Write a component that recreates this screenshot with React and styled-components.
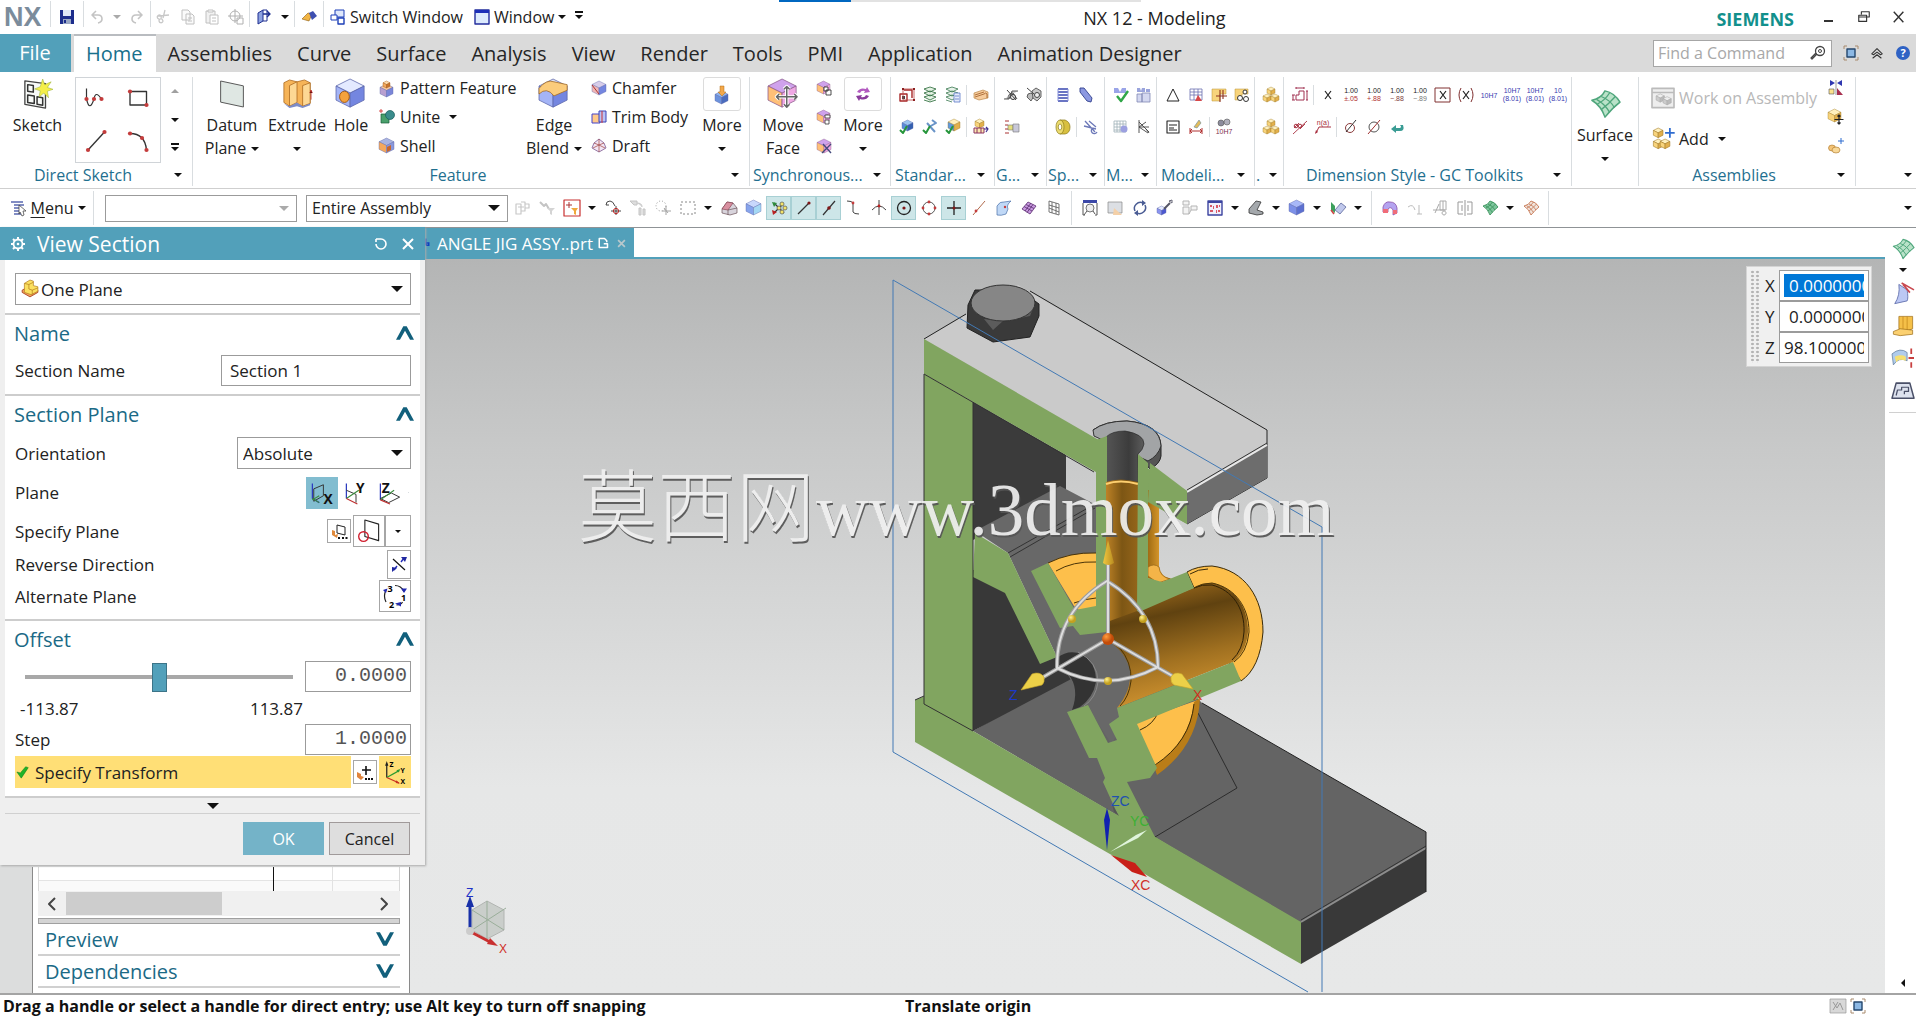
import React from 'react';
import styled, { createGlobalStyle } from 'styled-components';

const GlobalStyle = createGlobalStyle`
  * {
    box-sizing: border-box;
  }
  body {
    margin: 0;
    background: #fff;
    color: #222;
    font-family: 'Open Sans', 'Noto Sans', sans-serif;
    font-size: 16px;
  }
  button, input, select {
    font: inherit;
    color: inherit;
    border-radius: 0;
    margin: 0;
  }
`

/* ---------- shared bits ---------- */

const Page = styled.div`
  display: flex;
  flex-direction: column;
  height: 100vh;
  overflow: hidden;
`
const PlainButton = styled.button`
  display: inline-flex;
  align-items: center;
  justify-content: center;
  flex: none;
  padding: 0;
  border: 0;
  background: none;
`
const Caret = styled.span`
  flex: none;
  width: 0;
  height: 0;
  border-style: solid;
  border-width: ${p => p.$size || 4}px ${p => p.$size || 4}px 0;
  border-color: ${p => p.$color || '#111'} transparent transparent;
`
const OverCaret = styled(Caret)`
  position: relative;
  &::before {
    content: '';
    position: absolute;
    left: -4px;
    bottom: 6px;
    width: 8px;
    height: 2px;
    background: #111;
  }
`
const CaretSlot = styled(PlainButton)`
  width: ${p => p.$w || 20}px;
  height: 20px;
`
const Rule = styled.span`
  flex: none;
  width: 1px;
  height: ${p => p.$h || 34}px;
  margin: 0 ${p => p.$gap || 0}px;
  background: #d9dde0;
`
const SelectWrap = styled.div`
  display: flex;
  align-items: center;
  gap: 2px;
  flex: ${p => p.$w ? 'none' : 1};
  width: ${p => p.$w ? p.$w + 'px' : 'auto'};
  height: ${p => p.$h}px;
  padding: 0 7px 0 5px;
  border: 1px solid #9b9b9b;
  background: #fff;
  select {
    flex: 1;
    min-width: 0;
    padding: 0;
    border: 0;
    outline: 0;
    appearance: none;
    background: none;
  }
`

/* ---------- icons ---------- */

const Svg = styled.svg`
  display: block;
  flex: none;
  overflow: visible;
`

const Cube = ({ x = 1, y = 1, s = 14, top = '#e4eaff', left = '#a4b4f6', right = '#7486e0', edge = '#5a64a8' }) => {
  const h = s / 2, q = s / 4
  return (
    <g strokeWidth=".4" stroke={edge} strokeLinejoin="round">
      <path d={`M${x} ${y + q}l${h} ${-q}l${h} ${q}l${-h} ${q}z`} fill={top} />
      <path d={`M${x} ${y + q}l${h} ${q}v${h}l${-h} ${-q}z`} fill={left} />
      <path d={`M${x + s} ${y + q}l${-h} ${q}v${h}l${h} ${-q}z`} fill={right} />
    </g>
  )
}
const GoldCube = p => <Cube top="#fff0bc" left="#f8d47c" right="#e2b04c" edge="#a07824" {...p} />
const SyncCube = p => <Cube top="#cfa2ec" left="#ffc078" right="#f0a8e4" edge="#8a5a8c" {...p} />
const Tiny = ({ y, c = '#222', children }) => (
  <text x="8" y={y} fontSize="7" textAnchor="middle" fill={c} fontFamily="'Liberation Sans', sans-serif">{children}</text>
)
const Dot = ({ x, y, r = 1.4, c = '#c43c3c' }) => <circle cx={x} cy={y} r={r} fill={c} />
const L = ({ d, c = '#333', w = 1, f = 'none' }) => <path d={d} stroke={c} strokeWidth={w} fill={f} strokeLinejoin="round" />
const Sheet = ({ c = '#4fa67c', f = '#b9e2c8' }) => (
  <>
    <L d="M1 6Q6 5 8 1Q13 2 16 7Q12 10 8 15Q6 9 1 6z" c={c} f={f} w={0.8} />
    <L d="M3.500 5.500Q8 8 10.500 12.500M6 4Q11 6 13 10M4 8Q8 6 10.500 2M6 11Q10 8 13.500 4" c={c} w={0.7} />
  </>
)

const shapes = {
  save: <><path d="M1 1h14v14H1z" fill="#1c2d8c" /><path d="M4 1h8v6H4z" fill="#dfe7f7" /><path d="M4 10h8v5H4z" fill="#9aa7c4" /><path d="M5 11h2v3H5z" fill="#1c2d8c" /></>,
  undo: <L d="M3 6h6q4 0 4 4q0 3-4 4M7 2L3 6l4 4" c="#c4c4c4" w={1.6} />,
  redo: <L d="M13 6H7q-4 0-4 4q0 3 4 4M9 2l4 4l-4 4" c="#c4c4c4" w={1.6} />,
  cut: <L d="M9 1L7 9M2 7l11-1M6 10a2 2 0 1 0 1 2zM5 9a2 2 0 1 0-2 1" c="#c8c8c8" w={1.3} />,
  copy: <L d="M2 1h6l2 2v8H2zM6 5h6l2 2v8H6zM8 9h4M8 12h4" c="#c0c0c0" f="#fafafa" />,
  paste: <><L d="M2 2h9v12H2z" c="#c0c0c0" f="#f1f1f1" /><L d="M6 6h8v9H6zM8 9h4M8 12h4M4 1h5v2H4z" c="#c0c0c0" f="#fff" /></>,
  target: <><circle cx="7" cy="7" r="5" fill="none" stroke="#b0b0b0" /><L d="M7 0v14M0 7h15M9 9h6v6H9z" c="#b0b0b0" /></>,
  exit: <><L d="M2 4l5-3v11l-5 3z" c="#1e2f90" f="#8da2e0" /><L d="M7 5h7M11 2l3 3l-3 3" c="#1e2f90" w={1.4} /><L d="M7 1h4v11H7" c="#1e2f90" /></>,
  hand: <><path d="M1 10l6-6l4 1l-3 7z" fill="#f2b544" stroke="#8a5a10" strokeWidth=".6" /><path d="M8 4l4-2l4 5l-5 4z" fill="#3e4fb0" /></>,
  switchWin: <><L d="M5 1h9v7H5z" c="#1c3fb8" f="#dfe8fb" /><L d="M1 6h6v5H1z" c="#1c3fb8" f="#fff" /><L d="M8 9h6v6H8z" c="#1c3fb8" f="#fff" w={1.4} /></>,
  window: <><L d="M1 1h14v14H1z" c="#222c9c" f="#dceafd" w={1.4} /><path d="M1 1h14v3H1z" fill="#1c2fb8" /></>,
  search: <><circle cx="10" cy="6" r="4.500" fill="none" stroke="#444" strokeWidth="1.300" /><circle cx="10" cy="6" r="1.500" fill="none" stroke="#444" /><L d="M7 9l-5 5l-1-1l5-5" c="#444" w={1.3} /></>,
  full: <><L d="M4 4h8v8H4z" c="#24476e" f="#8cb8e4" w={1.400} /><L d="M1 4V1h3M12 1h3v3M15 12v3h-3M4 15H1v-3" c="#a88a6c" /></>,
  up: <L d="M2 9l6-6l6 6l-2 1l-4-3l-4 3zM3 14l5-4l5 4" c="#333" w={1.2} />,
  help: <><circle cx="8" cy="8" r="7" fill="#2f62c4" /><text x="8" y="12" fontSize="11" fontWeight="700" textAnchor="middle" fill="#fff">?</text></>,
  min: <path d="M3 11h9v2H3z" fill="#333" />,
  restore: <L d="M5 5V2h9v6h-3M2 6h9v7H2zM2 8h9" c="#333" w={1.3} />,
  close: <L d="M2 2l11 12M13 2L2 14" c="#333" w={1.6} />,

  sketch: <><L d="M1 1l11 1.500v13L1 13.500z" c="#444" f="#f7f9f7" w={0.7} /><L d="M2.500 3l3 .5v3.500l-3-.5zM2.500 8.500l3.500.6v4l-3.500-.6zM7.500 9.500l3 .5v4l-3-.5z" c="#333" w={0.8} /><path d="M10.500 0l1 3l3.500-1.500l-2 3l3 1l-3 1l.6 3.500l-2.500-2.500l-2.500 2l.6-3.200l-3-1l3-1.200z" fill="#f4ee4a" stroke="#9db43c" strokeWidth=".3" /></>,
  spline: <><L d="M1 1v7q2 9 5 0q1-6 5 0" c="#333" w={0.8} /><Dot x={1} y={8} /><Dot x={6} y={8} /><Dot x={11} y={8} /></>,
  rect: <><L d="M2 3h11v9H2z" c="#333" w={0.9} /><Dot x={2} y={3} /><Dot x={13} y={12} /></>,
  line: <><L d="M2 14L13 2" c="#333" w={0.9} /><Dot x={2} y={14} /><Dot x={13} y={2} /></>,
  arc: <><L d="M2 3q10 0 11 11" c="#333" w={0.9} /><Dot x={2} y={3} /><Dot x={10} y={6} /><Dot x={13} y={14} /></>,
  datum: <L d="M1 0l14 3v13L1 13z" c="#555" f="#dfe7e3" w={0.6} />,
  extrude: <g stroke="#a8641a" strokeWidth=".4"><path d="M1 2l3-1.500l4 1l4-1l3 1.500v11l-4 1.500l-3-1.500l-4 1.500l-3-2z" fill="#f6b458" /><path d="M4 3.500l4-2v11l-4 2zM11 3.500l4-1.500v11l-4 1.500z" fill="#fdd894" /><path d="M1 13l3 1.500l4-2l3 2l4-1.500v1l-4 1.500l-3-1l-4 1z" fill="#7c8cc8" stroke="none" /><path d="M15.500 6v5M14.800 7.500l.7-1.500l.7 1.500" stroke="#c02020" /></g>,
  hole: <><Cube s={15} x={0} y={0} /><ellipse cx="4.500" cy="9.500" rx="2.600" ry="3" fill="#f5a23c" stroke="#a05810" strokeWidth=".5" /></>,
  pattern: <><Cube x={1} y={4} s={13} top="#f4c49c" left="#b9a0d0" right="#7a86d8" /><Cube x={4} y={1} s={7} top="#ffdcac" left="#f2a85c" right="#c8742c" edge="#a0581c" /></>,
  unite: <><path d="M2 5h8v9H2z" fill="#4aa06c" stroke="#175c3a" strokeWidth=".7" /><circle cx="11" cy="6" r="4.500" fill="#3a8c8c" stroke="#175c5a" strokeWidth=".7" /><L d="M2 0v4M0 2h4" c="#c22" w={0.8} /></>,
  shell: <><Cube s={15} x={0} y={0} left="#f5a85c" top="#aab4e0" right="#8a98dc" /><path d="M8 9l4-2v5l-4 2z" fill="#c8672c" /></>,
  edge: <><Cube s={15} x={0} y={0} top="#dfe2f2" /><path d="M0 5Q4 0 8 1.500l7 1.500v3l-7 3Q4 4 0 8z" fill="#fbcc7c" stroke="#a0661c" strokeWidth=".4" /></>,
  chamfer: <><Cube s={14} left="#f0b8b8" top="#d7cdea" /><L d="M1 5l7 9" c="#a33" /></>,
  trim: <><L d="M1 5h8v9H1z" c="#44c" f="#ffc98a" /><L d="M8 2h7v11H8z" c="#3a44b8" f="#b9c2f6" /><L d="M11 2v12" c="#c33" /></>,
  draft: <><L d="M8 1l5 4l2 5l-7 4l-7-4l2-5z" c="#8a6a9c" f="#f2e6f4" w={0.9} /><L d="M8 1v13M2 10l6-3l6 3M3 5l5 2l5-2" c="#a0403c" w={0.7} /></>,
  insert: <><Cube x={1} y={5} s={13} top="#8fb4ee" left="#6c92dc" right="#4a6cbe" /><path d="M6 0h4v6h2l-4 4l-4-4h2z" fill="#f3a84a" stroke="#b06c18" strokeWidth=".5" /></>,
  moveFace: <><SyncCube s={15} x={0} y={0} /><L d="M10 4v11M4.500 9.500h11M8.500 5.500L10 4l1.500 1.500M8.500 13.500L10 15l1.500-1.500M6 8l-1.500 1.500L6 11M14 8l1.500 1.500L14 11" c="#fff" w={1.800} /><L d="M10 4v11M4.500 9.500h11M8.500 5.500L10 4l1.500 1.500M8.500 13.500L10 15l1.500-1.500M6 8l-1.500 1.500L6 11M14 8l1.500 1.500L14 11" c="#666" w={0.8} /></>,
  facePull: <><SyncCube s={13} /><L d="M8 7h4v4H8zM10 10h5v5h-5z" c="#222" f="#fff" w={0.8} /></>,
  faceOff: <><SyncCube s={13} /><L d="M9 6h5v3H9zM9 11h4v4H9z" c="#333" f="#fff" w={0.8} /></>,
  faceDel: <><SyncCube s={14} /><L d="M7 6l8 9M15 6l-9 9" c="#444a7c" w={1.4} /></>,
  recycle: <><path d="M2 6q3-5 9-3l1-2l3 5l-6 1l1-2q-4-1-5 2z" fill="#b25ac0" /><path d="M14 10q-3 5-9 3l-1 2l-3-5l6-1l-1 2q4 1 5-2z" fill="#8a3c9c" /></>,

  cage: <><L d="M1 7h7v7H1zM5 3h8v8" c="#a82828" w={1.4} /><path d="M3 9h3v3H3z" fill="#444" /><L d="M4 2h11v11H4z" c="#b84848" w={0.8} /><path d="M3 1h2v2H3zM14 1h2v2h-2zM14 12h2v2h-2z" fill="#8c2020" /></>,
  stack: <><L d="M8 0l6 2l-6 3l-6-3zM8 4l6 2l-6 3l-6-3zM8 8l6 2l-6 3l-6-3zM2 13l6 2l6-2" c="#286838" f="#e4f2e4" w={0.8} /></>,
  stackList: <><L d="M7 0l6 2l-6 3l-6-3zM7 4l6 2l-6 3l-6-3zM7 8l6 2l-6 3l-6-3zM1 13l6 2" c="#3a7850" f="#e8f2ea" w={0.8} /><L d="M9 6h6v9H9zM10 9h4M10 12h4" c="#5a78c8" f="#e6ecfb" w={0.8} /></>,
  tape: <><path d="M1 6l9-3l5 2v6l-9 2l-5-2z" fill="#f6cc9c" stroke="#b07838" strokeWidth=".6" /><L d="M2 8l9-3M2 10l9-3M14 11V7q-1-2-3 0" c="#a05c24" w={0.8} /></>,
  blueCheck: <><Cube x={3} y={1} s={11} top="#9cc4f0" left="#5a8cd8" right="#3460b0" /><L d="M1 11l3 3l4-7" c="#27963c" w={2} /></>,
  toolCheck: <><L d="M5 4l8 9M10 1l4 3l-7 4" c="#6a94c8" w={2} /><L d="M1 11l3 3l4-7" c="#27963c" w={2} /></>,
  goldCheck: <><GoldCube x={3} y={0} s={12} left="#5f9ae0" /><L d="M1 11l3 3l4-7" c="#27963c" w={2} /></>,
  parts: <><GoldCube x={2} y={0} s={9} /><L d="M1 9h10v5H1zM4 9v5M8 9v5" c="#8a3060" f="#fbe8b0" /><L d="M11 10h4M13 8l2 2l-2 3" c="#403090" w={1.2} /></>,
  gear: <><L d="M1 12h5l3-8h6M5 12q0-6 5-6l4 6" c="#444" f="#d0d0d0" w={0.9} /><circle cx="10" cy="10" r="2.500" fill="#eee" stroke="#333" /><L d="M4 3l9 10" c="#444" /></>,
  gearPair: <><path d="M1 10q0-4 4-4l3 3l-3 5z" fill="#bbb" stroke="#444" strokeWidth=".8" /><path d="M6 4l4-3l5 3v6l-4 4l-4-3z" fill="#c8c8c8" stroke="#444" strokeWidth=".8" /><circle cx="11" cy="8" r="2.500" fill="#eee" stroke="#444" /><L d="M1 1l7 6" c="#444" /></>,
  gearList: <><L d="M2 2h4M2 6h3M2 10h3M2 14h4" c="#a33" /><path d="M5 6h5v5H5z" fill="#e5df7c" stroke="#777" strokeWidth=".6" /><path d="M10 5h6v8h-6z" fill="#c8c8d8" stroke="#777" strokeWidth=".6" /></>,
  coil: <><L d="M3 2h10M3 5h10M3 8h10M3 11h10M3 14h10" c="#3a48b0" w={1.6} /><L d="M3 2v12M13 2v12" c="#8a94dc" /></>,
  spring: <path d="M2 1l4 0l8 10l-1 4l-4-1L2 5z" fill="#8c98e0" stroke="#30408c" strokeWidth=".9" />,
  ring: <><path d="M5 1h5q5 2 5 7q0 6-5 7H5z" fill="#d8c040" stroke="#8a7818" strokeWidth=".7" /><ellipse cx="5" cy="8" rx="4" ry="7" fill="#ecdc70" stroke="#8a7818" strokeWidth=".7" /><ellipse cx="5" cy="8" rx="1.800" ry="3" fill="#fff" stroke="#8a7818" strokeWidth=".7" /></>,
  scissors: <L d="M2 2l10 11M1 7l12 3M6 2l7 6M10 9a3 3 0 1 0 4 4" c="#6c78b8" w={1.3} />,
  vCheck: <><path d="M1 1h4l2 4l2-4h4v5H1z" fill="#9aa4e8" /><L d="M4 9l4 5l7-10" c="#2fa648" w={2.400} /></>,
  bars: <><L d="M1 7h5v8H1zM6 6h8v9H6z" c="#8088b4" f="#d4d8f0" w={0.8} /><path d="M1 1h3l1 3l1-3h3v4H1zM10 2h4v3h-4z" fill="#9aa4dc" /></>,
  table: <><L d="M1 2h12v11H1zM1 5h12M1 8h12M1 11h12M4 2v11M7 2v11M10 2v11" c="#a0b0b8" w={0.8} /><circle cx="11" cy="10" r="3.500" fill="#9ca0e0" /></>,
  axis: <L d="M3 1v13M3 8h10M3 8l9 6M3 3l10 10M10 3L3 8M10 10l3 4" c="#444" w={0.9} />,
  tri: <L d="M8 2l6 12H2z" c="#222" />,
  grid: <><L d="M2 2h12v11H2zM2 5h12M2 8h12M6 2v11M10 2v11" c="#6a70b0" w={0.8} /><path d="M10 8l4 6H7z" fill="#d84848" /></>,
  goldPlus: <><path d="M1 2h14v5H9v7H1z" fill="#f8d47c" stroke="#b89030" strokeWidth=".5" /><L d="M9 3v12M5 9h11M12 3v9" c="#8c3020" w={1.1} /></>,
  goldGear: <><path d="M1 2h13v5H8v6H1z" fill="#f8d47c" stroke="#b89030" strokeWidth=".5" /><circle cx="12" cy="12" r="2.500" fill="#fff" stroke="#333" /><circle cx="6" cy="11" r="2.500" fill="#fff" stroke="#333" /><circle cx="11" cy="5" r="2" fill="#fff" stroke="#333" /></>,
  note: <L d="M2 2h12v12H2zM4 6h8M4 9h5M4 11h8" c="#222" w={1.1} />,
  dimension: <><path d="M6 8l5-7l2 3l-4 5z" fill="#e2bc5c" stroke="#6a8a9c" strokeWidth=".6" /><L d="M2 9v6M14 9v6M2 12h12M4 10l-2 2l2 2M12 10l2 2l-2 2" c="#b03030" /></>,
  h7: <><circle cx="5" cy="4" r="3" fill="#8c8c9c" stroke="#555" strokeWidth=".6" /><circle cx="11" cy="3" r="3" fill="#b0b0bc" stroke="#555" strokeWidth=".6" /><Tiny y={15} c="#803050">10H7</Tiny></>,
  cubes: <><GoldCube x={4} y={0} s={8} /><GoldCube x={0} y={7} s={8} /><GoldCube x={8} y={7} s={8} /></>,
  stepDim: <L d="M4 13V8h3V4h5v9zM4 1h8M4 0v2M12 0v2M1 8v5M0 8h3M0 13h3M15 4v9M14 4h2M14 13h2" c="#a03050" w={1} />,
  x: <L d="M5 4l6 8M11 4l-6 8" c="#222" w={1.2} />,
  d1: <><Tiny y={6}>1.00</Tiny><Tiny y={14} c="#b03030">±.05</Tiny></>,
  d2: <><Tiny y={6}>1.00</Tiny><Tiny y={14} c="#b03030">+.88</Tiny></>,
  d3: <><Tiny y={6}>1.00</Tiny><Tiny y={14} c="#804040">−.88</Tiny></>,
  d4: <><Tiny y={6}>1.00</Tiny><Tiny y={14} c="#777">−.89</Tiny></>,
  xbox: <><L d="M0 1h15v14H0z" c="#803030" /><L d="M5 4l6 8M11 4l-6 8" c="#222" w={1.2} /></>,
  xparen: <><L d="M3 1q-4 7 0 14M13 1q4 7 0 14" c="#803030" /><L d="M5 4l6 8M11 4l-6 8" c="#222" w={1.2} /></>,
  t1: <Tiny y={11} c="#3838b0">10H7</Tiny>,
  t2: <><Tiny y={6} c="#3838b0">10H7</Tiny><Tiny y={14} c="#3838b0">(8.01)</Tiny></>,
  t3: <><Tiny y={6} c="#3838b0">10H7</Tiny><Tiny y={14} c="#3838b0">(8.01)</Tiny></>,
  t4: <><Tiny y={6} c="#3838b0">10</Tiny><Tiny y={14} c="#3838b0">(8.01)</Tiny></>,
  leader: <><L d="M1 15L15 2M2 9l5-5M8 10l5-5" c="#a83040" w={0.9} /><circle cx="4" cy="7" r="1.800" fill="none" stroke="#a83040" /><circle cx="8" cy="7" r="1.800" fill="none" stroke="#a83040" /></>,
  flag: <><L d="M1 14l3-6h12" c="#a83040" /><path d="M0 15l1-4l2 2z" fill="#a83040" /><Tiny y={6} c="#a83040">n(a)</Tiny></>,
  dia1: <><circle cx="7" cy="9" r="4.500" fill="none" stroke="#8a3a3a" /><L d="M3 13L13 1" c="#333" /></>,
  dia2: <><circle cx="8" cy="8" r="5" fill="none" stroke="#555" /><L d="M2 15L14 1" c="#a03030" /></>,
  back: <path d="M2 10l5-4v3h4q2-1 0-3h3q2 6-3 6H7v2z" fill="#3a9c94" />,
  sheet: <Sheet />,
  workAsm: <><L d="M0 1h16v14H0zM0 4h16" c="#bbb" f="#eee" w={1.2} /><Cube x={3} y={5} s={6} top="#eee" left="#ccc" right="#bbb" edge="#aaa" /><Cube x={8} y={7} s={6} top="#eee" left="#ccc" right="#bbb" edge="#aaa" /></>,
  add: <><GoldCube x={1} y={0} s={7} /><GoldCube x={1} y={8} s={7} /><GoldCube x={6} y={8} s={7} /><L d="M13 0v7M9.500 3.500h7" c="#2f6cd0" w={1.3} /></>,
  mirror: <><path d="M2 0l5 3l-5 3zM14 0L9 3l5 3z" fill="#3038b0" /><L d="M8 0v15" c="#555" w={0.6} /><path d="M1 9h5v5H1z" fill="#fbe28c" stroke="#555" strokeWidth=".6" /><path d="M9 15V8l6 7z" fill="#a83050" /></>,
  moveComp: <><GoldCube s={13} x={0} y={0} /><L d="M11 6v9M6.500 10.500h9M9.500 7.500L11 6l1.500 1.500M9.500 13.500L11 15l1.500-1.500" c="#222" w={1.2} /></>,
  constraint: <><ellipse cx="4" cy="10" rx="3.500" ry="3" fill="#f4c478" stroke="#a87020" strokeWidth=".6" /><ellipse cx="8" cy="12" rx="4" ry="3" fill="#f8d898" stroke="#a87020" strokeWidth=".6" /><L d="M13 0v6M10 3h6" c="#2f6cd0" /></>,

  menu: <><L d="M0 2h12M3 5h10M3 8h7M3 11h7M3 14h7" c="#5a68b0" w={1.5} /><path d="M8 5l7 6h-3l1 4l-2 1l-2-4l-1 2z" fill="#fff" stroke="#333" strokeWidth=".7" /></>,
  greyParts: <L d="M2 4h5v10H2zM7 2h4v9H7M11 4h4v4h-4M4 7h6" c="#c8c8c8" w={1.2} />,
  greyFilter: <><L d="M1 2l4 4l2-2l3 5" c="#c4c4c4" w={2} /><path d="M8 8h8l-3 3v4l-2-1v-3z" fill="#d4d4d4" /></>,
  filter: <><L d="M0 0h16v16H0z" c="#c83030" f="#fff" w={1.2} /><path d="M7 8h7l-2 3v4l-2-1v-3z" fill="#f0a83c" /><L d="M5 2v6M2 5h6" c="#a33" w={1} /></>,
  arrowTarget: <><L d="M1 5q0-4 4-4q3 0 5 5M1 5h3M11 6v9M6 11h10" c="#333" w={0.9} /><circle cx="11" cy="11" r="2.600" fill="none" stroke="#b22" /></>,
  greyArrow: <L d="M0 1h7v4H4zM7 3q5 0 5 4M9 8h2v7H9zM13 9h2v6h-2z" c="#c4c4c4" f="#ddd" />,
  greyTree: <><circle cx="6" cy="6" r="5" fill="none" stroke="#999" strokeDasharray="1 2" /><L d="M11 6v9M7 11h9M9 8l4 5" c="#a4a4a4" w={1} /></>,
  marquee: <path d="M1 2h14v12H1z" fill="none" stroke="#888" strokeDasharray="2 2" />,
  houseCube: <><path d="M1 9l5-7l6 1l4 5v5l-7 2l-8-2z" fill="#d8d4dc" stroke="#6a5058" strokeWidth=".7" /><path d="M1 9l5-7l6 1l-5 7z" fill="#d890a0" stroke="#803848" strokeWidth=".6" /><L d="M7 10l9-2M7 10v5" c="#6a5058" w={0.7} /></>,
  solid: <Cube s={15} x={0} y={0} top="#c8d8fc" left="#86a4ec" right="#a4d8f4" />,
  snap: <><L d="M3 3l10 10M3 13L12 4" c="#333" w={1.2} /><path d="M1 2l5 1l-3 4z" fill="#2f8c3c" /><path d="M1 10l5 2l-4 3z" fill="#b22" /><g fill="#f4e468" stroke="#555" strokeWidth=".7"><circle cx="11" cy="4" r="2" /><circle cx="14" cy="8" r="2" /><circle cx="8" cy="8" r="2" /><circle cx="11" cy="12" r="2" /></g></>,
  endPt: <><L d="M2 14L13 3" w={1.2} /><Dot x={13} y={3} r={1.6} c="#801818" /></>,
  midPt: <><L d="M2 15L14 1" w={1.2} /><Dot x={8} y={8} r={1.800} c="#801818" /></>,
  curvePt: <><L d="M1 1q5 0 6 2v9q1 2 6 2" c="#444" /><Dot x={7} y={3} /></>,
  cross: <><L d="M8 0v15M1 10q7-8 14 0" c="#444" /><Dot x={8} y={6} c="#b22" /></>,
  center: <><circle cx="8" cy="8" r="6.500" fill="none" stroke="#222" strokeWidth="1.300" /><Dot x={8} y={8} r={1.600} c="#801818" /></>,
  quad: <><circle cx="8" cy="8" r="6" fill="none" stroke="#555" /><Dot x={8} y={2} /><Dot x={8} y={14} /><Dot x={2} y={8} /><Dot x={14} y={8} /></>,
  plus: <><L d="M8 1v14M1 8h14" c="#222" w={1.300} /><Dot x={8} y={8} r={1.500} c="#801818" /></>,
  onCurve: <><L d="M2 15L14 1" c="#b06a4c" /><Dot x={5} y={11} /></>,
  face: <><path d="M1 6q3-5 7-4l7-1q-5 4-3 8l-2 5q-5 2-9 1z" fill="#c0d8f6" stroke="#4a70a8" strokeWidth=".7" /><Dot x={9} y={7} r={1.200} /></>,
  mesh: <><L d="M1 9l6-7l8 4l-6 8z" c="#5a2c70" f="#c89ae0" w={0.8} /><L d="M3 6.500l8 4.500M5 4.500l8 4M4 11l6-8M6 12.500l6-8" c="#5a2c70" w={0.8} /></>,
  gridPlane: <L d="M3 1l10 3v11L3 12zM3 5l10 3M3 8l10 4M6 2v11M10 3v11" c="#555" w={0.8} />,
  zoomFit: <><path d="M1 0h14v3H1z" fill="#3c48a8" /><L d="M1 3v12h2M15 3v12h-2" c="#555" /><circle cx="8" cy="8" r="4" fill="#eee" stroke="#777" /><L d="M5 11l-3 4M11 11l2 3" c="#555" /></>,
  shade: <><path d="M1 2h14v11H1z" fill="#dcdfe4" stroke="#888" strokeWidth=".7" /><path d="M7 8l8 7H6z" fill="#f4d0a8" /></>,
  rotate: <><L d="M3 11a6 6 0 0 1 8-8M13 5a6 6 0 0 1-8 8" c="#4a5c94" w={1.500} /><path d="M10 0l4 3l-4 3zM6 10l-4 3l4 3z" fill="#4a5c94" /></>,
  pan: <><Cube x={0} y={6} s={9} left="#8a94f0" right="#4c58d0" /><L d="M7 9l6-6" c="#556" w={2} /><L d="M12 1l3-1v3z" c="#667" f="#fff" /></>,
  greyDocs: <L d="M1 1h6v4H1zM1 7h6v7H1zM9 6h6v4H9zM9 10l-2 4" c="#b4b4b4" f="#f4f4f4" w={1} />,
  layout: <><L d="M1 1h14v14H1z" c="#3c44a0" f="#f0f0fc" w={1.400} /><path d="M1 1h14v2H1z" fill="#3c44a0" /><g fill="#d85868"><path d="M3 5h2v2H3zM6 6h1v3H6zM9 5h2v3H9zM12 5h1v2h-1zM3 10h3v2H3zM9 10h1v3H9zM11 10h2v2h-2z" /></g></>,
  wedge: <path d="M1 9l7-8l5 1l-4 8l6 2v2l-6 1l-8-2z" fill="#a4a8ac" stroke="#333" strokeWidth=".8" />,
  blueCube: <Cube s={15} x={0} y={0} top="#a8b8f8" left="#7c90e8" right="#5c70d0" />,
  planes: <><path d="M1 2l4 4v7l-4-3z" fill="#3ca05c" /><path d="M5 10l6-7l5 4l-6 7z" fill="#c0c8ec" stroke="#4a5890" strokeWidth=".7" /><L d="M1 10l3 4" c="#c44" w={1.500} /></>,
  section: <><path d="M1 7q2-6 7-5q6 0 7 6v5l-4 2V10q-2-4-5-1v3H1z" fill="#b4a4f0" stroke="#8c50a8" strokeWidth=".8" /><path d="M1 9h5v4H1zM11 10h4v4h-4z" fill="#f06c78" /></>,
  greySmall: <L d="M1 7q5-4 7 3M12 5v9M10 14h5" c="#bbb" />,
  greyCar: <L d="M8 1h6v9H8zM1 10h12M3 13l4-9M12 11a2 2 0 1 0 .1 0M11 1v9" c="#aaa" />,
  greyBook: <L d="M6 2H1v12h5M10 2h5v12h-5M8 0v16M5 5v6M11 5v6" c="#999" w={1} />,
  gradient: <Sheet c="#2f8c50" f="#7cc49c" />,
  ribs: <Sheet c="#c06840" f="#f0e4dc" />,

  gearWhite: <><circle cx="8" cy="8" r="4.500" fill="none" stroke="#fff" strokeWidth="1.800" /><circle cx="8" cy="8" r="1.300" fill="#fff" /><path d="M8 1v2.500M8 12.500V15M1 8h2.500M12.500 8H15M3 3l2 2M11 11l2 2M13 3l-2 2M5 11l-2 2" stroke="#fff" strokeWidth="2" /></>,
  reset: <><L d="M8 3a5 5 0 1 1-5 5" c="#fff" w={1.600} /><L d="M3 3h5M3 3v3" c="#fff" w={1.600} /></>,
  closeWhite: <L d="M3 3l10 10M13 3L3 13" c="#fff" w={2} />,
  closePart: <L d="M2 2l12 12M14 2L2 14" c="#b9c8cc" w={3} />,
  onePlane: <><path d="M1 9l8-4l6 4v2l-7 4l-7-4z" fill="#f4a060" stroke="#a03818" strokeWidth=".7" /><path d="M3 3l5-3l3 1v4l4 1v4l-6 3l-6-2z" fill="#fbe060" stroke="#b07818" strokeWidth=".6" /><L d="M3 3l4 1v4l3 1M7 4l4-2M10 9v4M10 9l5-2" c="#b07818" w={0.6} /></>,
  planeX: <><L d="M1 1v11l5 3" c="#2c3cc0" w={0.9} /><L d="M2 5l7-3v8l-7 4z" c="#333" w={0.7} /><L d="M1 13l5-3M1 12l5 3" c="#3a8c3c" w={0.8} /><text x="9" y="16" fontSize="10" fontWeight="700" fill="#111">X</text></>,
  planeY: <><L d="M1 1v11" c="#2c3cc0" w={0.9} /><L d="M1 6l7 3v6" c="#333" w={0.7} /><L d="M1 12l9-6" c="#3a8c3c" w={0.8} /><L d="M1 12l8 4" c="#c03030" w={0.8} /><text x="8" y="8" fontSize="10" fontWeight="700" fill="#111">Y</text></>,
  planeZ: <><L d="M1 1v12" c="#2c3cc0" w={0.9} /><L d="M1 12l8-4l6 3l-8 4z" c="#333" w={0.7} /><L d="M1 13l10-7" c="#3a8c3c" w={0.8} /><L d="M1 13l7 3" c="#c03030" w={0.8} /><text x="2" y="8" fontSize="10" fontWeight="700" fill="#111">Z</text></>,
  dlgPlane: <><L d="M6 2l8 2v8l-8-2z" c="#222" /><path d="M1 7l3 1v4l3-1l-1 4l-5-3z" fill="#e08a3c" /><path d="M7 14h2v2H7zM11 14h2v2h-2zM14.500 14h2v2h-2z" fill="#111" /></>,
  inferPlane: <><L d="M5 0l10 3v12L5 12z" c="#222" w={0.8} /><circle cx="4" cy="12" r="3.500" fill="none" stroke="#d02030" strokeWidth="1" /></>,
  reverse: <><L d="M2 3l12 11" c="#111" w={1.200} /><L d="M3 14l3-4M10 6l3-4" c="#2028b8" w={1.400} /><path d="M1 11l5 1l-5 4zM10 1h6l-2 5z" fill="#2028a0" /></>,
  cycle: <><text x="3" y="5" fontSize="6" fontWeight="700">3</text><text x="12" y="11" fontSize="6" fontWeight="700">1</text><text x="4" y="16" fontSize="6" fontWeight="700">2</text><L d="M8 1q4 0 6 4M13 12q-1 2-4 2M2 12q-2-4 0-8" c="#222" w={0.8} /><path d="M12 3h4l-2 3zM8 13l4-1v3zM0 4l3-1l-1 3z" fill="#2028b0" /></>,
  pointDlg: <><L d="M9 2v9M5 6h9" c="#111" w={1.600} /><path d="M0 8l4 2v2l3 1l-3 3l-4-3z" fill="#e0843c" /><path d="M8 14h2v2H8zM11 14h2v2h-2zM14 14h2v2h-2z" fill="#111" /></>,
  csys: <><L d="M2 12V2" c="#222" w={0.9} /><L d="M2 12l9-5" c="#2c9a30" w={0.9} /><L d="M2 12l9 4" c="#c83020" w={0.9} /><path d="M.8 3.500L2 0l1.200 3.500z" fill="#222" /><path d="M9 6.800l3-1l-1.500 2.500z" fill="#2c9a30" /><path d="M9 14l2.500 2.500L8.500 16z" fill="#c83020" /><g fontSize="5" fontWeight="700"><text x="4" y="4">Z</text><text x="12" y="9">Y</text><text x="12" y="17">X</text></g></>,
  check: <path d="M1 8l4 1l6-7l3 1l-8 12z" fill="#1fb428" stroke="#127c18" strokeWidth=".6" />,
  chevUp: <path d="M0 14L6.500 2h3L16 14h-3.500L8 6l-4.500 8z" fill="#12607c" />,
  chevDown: <path d="M0 2l6.500 12h3L16 2h-3.500L8 10L3.500 2z" fill="#12607c" />,
  arrowL: <L d="M11 2L5 8l6 6" c="#444" w={2} />,
  arrowR: <L d="M5 2l6 6l-6 6" c="#444" w={2} />,
  bend: <><path d="M5 1l6 4q1 6 0 8l-9 2q4-6 3-14z" fill="#bcc8f4" stroke="#5a68a8" strokeWidth=".6" /><L d="M7 0l9 5M8 1l5 6" c="#c84850" w={1.200} /></>,
  goldBlock: <><path d="M5 1h10v9l-5 2l-5-2z" fill="#f5c048" stroke="#9a6a14" strokeWidth=".5" /><path d="M8 1v9M11 1v11" stroke="#c88c20" strokeWidth=".6" /><path d="M1 12l5-2l9 1v3l-9 1l-5-1z" fill="#fbd070" stroke="#9a6a14" strokeWidth=".5" /></>,
  sweep: <><path d="M0 5q6-5 11-1v6q-6-3-10 3z" fill="#b0ccec" stroke="#5a7898" strokeWidth=".5" /><path d="M2 7q5-2 8 0v3q-5-2-7 1z" fill="#f6e070" /><L d="M14 1v4M14 11v4M12 8h4" c="#c84040" w={1.300} /></>,
  cavity: <><L d="M3 3h10l3 11H0z" c="#4a5068" f="#dde2ee" w={1.1} /><L d="M3 12l1-4h3V6h5v3H9v2" c="#4a5068" w={0.9} /></>,
  part: <path d="M5 2v9M5 8h4v3H6z" stroke="#1040c0" strokeWidth="2" fill="none" />,
  pin: <L d="M9 9h5v5H3V2h7l3 3v2" c="#fff" w={2} />,
  greyBook2: <><path d="M0 1h16v14H0z" fill="#d8d8d8" stroke="#999" strokeWidth=".7" /><L d="M3 4l4 6l3-5l3 7M3 12l5-8" c="#999" /></>
}

const Icon = ({ name, size = 16 }) => (
  <Svg width={size} height={size} viewBox="0 0 16 16" aria-hidden="true">{shapes[name]}</Svg>
)

/* ---------- title bar ---------- */

const TitleBar = styled.header`
  display: flex;
  align-items: center;
  flex: none;
  height: 34px;
  padding: 0 0 6px 4px;
`
const Progress = styled.div`
  position: absolute;
  top: 0;
  left: 779px;
  width: 362px;
  height: 2px;
  background: linear-gradient(90deg, #0067c0 72px, #e2e2e2 72px);
`
const Brand = styled.span`
  width: 45px;
  padding-top: 6px;
  font: 700 27px/28px 'Liberation Sans', sans-serif;
  color: #7b8c9c;
`
const QuickButton = styled(PlainButton)`
  width: ${p => p.$w || 24}px;
  padding-top: 6px;
`
const QuickText = styled(PlainButton)`
  gap: 4px;
  margin: 0 6px 0 5px;
  padding-top: 6px;
`
const Title = styled.h1`
  flex: 1;
  margin: 0;
  padding: 8px 0 0 6px;
  text-align: center;
  font-size: 18px;
  font-weight: 400;
  line-height: 24px;
`
const Siemens = styled.span`
  padding: 10px 17px 0 0;
  font-size: 18px;
  font-weight: 700;
  line-height: 24px;
  color: #12908c;
`

/* ---------- menu tabs ---------- */

const TabBar = styled.nav`
  display: flex;
  align-items: center;
  flex: none;
  height: 38px;
  background: #dadada;
`
const Tab = styled.button`
  height: 38px;
  padding: 0 13px 1px 12px;
  border: 0;
  border-top: 2px solid ${p => p.$active ? '#b9bcc0' : 'transparent'};
  background: ${p => p.$active ? '#fff' : 'none'};
  color: ${p => p.$active ? '#17708c' : '#262626'};
  font-size: 20px;
`
const FileTab = styled(Tab)`
  width: 71px;
  margin-right: 3px;
  border-top: 0;
  background: #52a0ba;
  color: #fff;
`
const Spacer = styled.span`
  flex: 1;
`
const FindBox = styled.label`
  display: flex;
  align-items: center;
  width: 179px;
  height: 27px;
  margin-right: 6px;
  padding: 0 5px 0 4px;
  border: 1px solid #a6a6a6;
  background: #fff;
  input {
    flex: 1;
    min-width: 0;
    padding: 0;
    border: 0;
    background: none;
  }
  input::placeholder {
    color: #a8a8a8;
    opacity: 1;
  }
`
const TabTool = styled(PlainButton)`
  width: 26px;
`

/* ---------- ribbon ---------- */

const RibbonBar = styled.section`
  display: flex;
  flex: none;
  height: 117px;
  padding: 5px 0 2px;
  border-bottom: 1px solid #cfcfcf;
`
const Group = styled.div`
  display: flex;
  flex-direction: column;
  flex: ${p => p.$w ? 'none' : 1};
  width: ${p => p.$w}px;
  border-right: ${p => p.$w ? '1px solid #d9dde0' : 0};
`
const GroupBody = styled.div`
  display: flex;
  flex: none;
  height: 87px;
  padding-left: ${p => p.$pad || 0}px;
`
const GroupFoot = styled.div`
  display: flex;
  align-items: center;
  height: 24px;
  padding-left: ${p => p.$pad || 2}px;
  color: #1f6f8f;
  > span {
    flex: 1;
    text-align: ${p => p.$left ? 'left' : 'center'};
    white-space: nowrap;
  }
`
const FootCaret = styled(PlainButton)`
  width: ${p => p.$w || 28}px;
  height: 20px;
`
const BigButton = styled.button`
  display: flex;
  flex-direction: column;
  align-items: center;
  flex: none;
  width: ${p => p.$w}px;
  padding: ${p => p.$top || 0}px 0 0;
  border: 0;
  background: none;
  line-height: 23px;
  white-space: nowrap;
`
const IconBox = styled.span`
  display: flex;
  align-items: center;
  justify-content: center;
  flex: none;
  width: 38px;
  height: 34px;
  margin-bottom: 3px;
  border: 1px solid ${p => p.$boxed ? '#dcdcdc' : 'transparent'};
  border-radius: 3px;
`
const Line = styled.span`
  display: flex;
  align-items: center;
  justify-content: center;
  flex: none;
  gap: 5px;
  height: 23px;
`
const Stack = styled.div`
  display: flex;
  flex-direction: column;
  align-items: flex-start;
  width: ${p => p.$w}px;
  padding-left: ${p => p.$pad || 0}px;
`
const SmallButton = styled(PlainButton)`
  gap: ${p => p.$wide ? 9 : 5}px;
  height: ${p => p.$tall ? 41 : 29}px;
  padding-bottom: ${p => p.$tall ? 0 : 7}px;
  color: ${p => p.$dim ? '#b8b8b8' : 'inherit'};
  white-space: nowrap;
`
const Labelled = styled.span`
  display: inline-flex;
  align-items: center;
  gap: 5px;
`
const Gallery = styled.div`
  display: grid;
  grid-template-columns: 1fr 1fr;
  place-items: center;
  width: 86px;
  height: 86px;
  border: 1px solid #d0d4d8;
`
const GalleryScroll = styled.div`
  display: flex;
  flex-direction: column;
  justify-content: space-around;
  align-items: center;
  width: 27px;
  height: 86px;
`
const UpCaret = styled(Caret)`
  transform: rotate(180deg);
`
const ToolGrid = styled.div`
  display: flex;
  flex-direction: column;
  gap: 12px;
  padding: 8px 0 0 4px;
`
const ToolRow = styled.div`
  display: flex;
  align-items: center;
  height: 20px;
`
const ToolButton = styled(PlainButton)`
  width: 23px;
  height: 20px;
`

const Tools = ({ rows }) => (
  <ToolGrid>
    {rows.map((row, i) => (
      <ToolRow key={i}>
        {row.map((n, j) => n === '|'
          ? <Rule key={j} $h={20} $gap={2} />
          : <ToolButton key={j} aria-label={n}><Icon name={n} /></ToolButton>)}
      </ToolRow>
    ))}
  </ToolGrid>
)

const toolGroups = [
  { w: 104, label: 'Standar...', rows: [['cage', 'stack', 'stackList', '|', 'tape'], ['blueCheck', 'toolCheck', 'goldCheck', '|', 'parts']] },
  { w: 52, label: 'G...', rows: [['gear', 'gearPair'], ['gearList']] },
  { w: 58, label: 'Sp...', rows: [['coil', 'spring'], ['ring', '|', 'scissors']] },
  { w: 52, label: 'M...', rows: [['vCheck', 'bars'], ['table', 'axis']] },
  { w: 98, label: 'Modeli...', rows: [['tri', 'grid', 'goldPlus', 'goldGear'], ['note', 'dimension', '|', 'h7']] },
  { w: 29, label: '.', rows: [['cubes'], ['cubes']] }
]

const Big = ({ w, icon, lines, caret, boxed, size = 30 }) => (
  <BigButton $w={w}>
    <IconBox $boxed={boxed}><Icon name={icon} size={boxed ? 16 : size} /></IconBox>
    {lines.map((t, i) => (
      <Line key={t}>{t}{caret === 'inline' && i === 1 && <Caret />}</Line>
    ))}
    {caret === 'below' && <Line><Caret /></Line>}
  </BigButton>
)

const Ribbon = () => (
  <RibbonBar>
    <Group $w={193}>
      <GroupBody>
        <Big w={75} icon="sketch" lines={['Sketch']} />
        <Gallery>
          {['spline', 'rect', 'line', 'arc'].map(n => <PlainButton key={n} aria-label={n}><Icon name={n} size={24} /></PlainButton>)}
        </Gallery>
        <GalleryScroll>
          <UpCaret $color="#a0a0a0" />
          <Caret />
          <OverCaret />
        </GalleryScroll>
      </GroupBody>
      <GroupFoot><span>Direct Sketch</span><FootCaret aria-label="Direct Sketch options"><Caret /></FootCaret></GroupFoot>
    </Group>
    <Group $w={557}>
      <GroupBody>
        <Big w={78} icon="datum" size={26} lines={['Datum', 'Plane']} caret="inline" />
        <Big w={52} icon="extrude" lines={['Extrude']} caret="below" />
        <Big w={56} icon="hole" lines={['Hole']} />
        <Stack $w={147}>
          <SmallButton><Icon name="pattern" />Pattern Feature</SmallButton>
          <SmallButton $wide><Labelled><Icon name="unite" />Unite</Labelled><Caret /></SmallButton>
          <SmallButton><Icon name="shell" />Shell</SmallButton>
        </Stack>
        <Big w={56} icon="edge" lines={['Edge', 'Blend']} caret="inline" />
        <Stack $w={115} $pad={9}>
          <SmallButton><Icon name="chamfer" />Chamfer</SmallButton>
          <SmallButton><Icon name="trim" />Trim Body</SmallButton>
          <SmallButton><Icon name="draft" />Draft</SmallButton>
        </Stack>
        <Big w={50} icon="insert" boxed lines={['More']} caret="below" />
      </GroupBody>
      <GroupFoot><span>Feature</span><FootCaret aria-label="Feature options"><Caret /></FootCaret></GroupFoot>
    </Group>
    <Group $w={141}>
      <GroupBody>
        <Big w={66} icon="moveFace" lines={['Move', 'Face']} />
        <Stack $w={24} $pad={0}>
          {['facePull', 'faceOff', 'faceDel'].map(n => <SmallButton key={n} aria-label={n}><Icon name={n} /></SmallButton>)}
        </Stack>
        <Big w={46} icon="recycle" boxed lines={['More']} caret="below" />
      </GroupBody>
      <GroupFoot $left $pad={3}><span>Synchronous...</span><FootCaret $w={26} aria-label="Synchronous options"><Caret /></FootCaret></GroupFoot>
    </Group>
    {toolGroups.map(g => (
      <Group key={g.label} $w={g.w}>
        <GroupBody><Tools rows={g.rows} /></GroupBody>
        <GroupFoot $left $pad={g.w > 90 ? 4 : 1}><span>{g.label}</span><FootCaret $w={g.w > 90 || g.w < 30 ? 26 : 22} aria-label={g.label + ' options'}><Caret /></FootCaret></GroupFoot>
      </Group>
    ))}
    <Group $w={288}>
      <GroupBody>
        <Tools rows={[
          ['stepDim', '|', 'x', 'd1', 'd2', 'd3', 'd4', 'xbox', 'xparen', 't1', 't2', 't3', 't4'],
          ['leader', 'flag', '|', 'dia1', 'dia2', 'back']
        ]} />
      </GroupBody>
      <GroupFoot><span>Dimension Style - GC Toolkits</span><FootCaret aria-label="Dimension options"><Caret /></FootCaret></GroupFoot>
    </Group>
    <Group $w={67}>
      <BigButton $w={66} $top={10}>
        <IconBox><Icon name="sheet" size={30} /></IconBox>
        <Line>Surface</Line>
        <Line><Caret /></Line>
      </BigButton>
    </Group>
    <Group $w={217}>
      <GroupBody $pad={13}>
        <Stack $w={176}>
          <SmallButton $tall $dim><Icon name="workAsm" size={22} />Work on Assembly</SmallButton>
          <SmallButton $tall $wide><Labelled><Icon name="add" size={22} />Add</Labelled><Caret /></SmallButton>
        </Stack>
        <Stack $w={24}>
          {['mirror', 'moveComp', 'constraint'].map(n => <SmallButton key={n} aria-label={n}><Icon name={n} /></SmallButton>)}
        </Stack>
      </GroupBody>
      <GroupFoot><span>Assemblies</span><FootCaret aria-label="Assemblies options"><Caret /></FootCaret></GroupFoot>
    </Group>
    <Group>
      <GroupBody />
      <GroupFoot><span /><FootCaret $w={16} aria-label="Ribbon options"><Caret /></FootCaret></GroupFoot>
    </Group>
  </RibbonBar>
)

/* ---------- selection bar ---------- */

const SelectionBar = styled.section`
  display: flex;
  align-items: center;
  flex: none;
  height: 38px;
`
const MenuButton = styled(PlainButton)`
  gap: 4px;
  width: 93px;
  padding-left: 3px;
  u {
    text-underline-offset: 3px;
  }
`
const SelectionTool = styled(PlainButton)`
  width: 25px;
  height: 24px;
  border: ${p => p.$on ? '1px solid #a8d0d4' : 0};
  background: ${p => p.$on ? '#cde6e8' : 'none'};
`
const Combos = styled.div`
  display: flex;
  gap: 9px;
  padding: 0 1px 0 11px;
`

const selectionTools = [
  'greyParts', 'greyFilter', 'filter', 'v', 'arrowTarget', 'greyArrow', 'greyTree', 'marquee', 'v',
  'houseCube', 'solid', '+snap', '+endPt', '+midPt', 'curvePt', 'cross', '+center', 'quad', '+plus',
  'onCurve', 'face', 'mesh', 'gridPlane', '|', 'zoomFit', 'shade', 'rotate', 'pan', 'greyDocs', 'layout', 'v',
  'wedge', 'v', 'blueCube', 'v', 'planes', 'v', '|', 'section', 'greySmall', 'greyCar', 'greyBook', 'gradient', 'v', 'ribs', '|'
]

/* ---------- work area ---------- */

const Main = styled.main`
  position: relative;
  display: flex;
  flex: 1;
  min-height: 0;
  border-top: 1px solid #8f9396;
`
const Dock = styled.aside`
  display: flex;
  flex-direction: column;
  justify-content: flex-end;
  flex: none;
  width: 410px;
  padding-left: 32px;
  background: #dcdddd;
`
const DockPanel = styled.div`
  height: 126px;
  padding: 0 9px 0 5px;
  border: solid #8a8a8a;
  border-width: 0 1px;
  background: #fff;
`
const DockTree = styled.div`
  display: flex;
  height: 24px;
  border: solid #d8d8d8;
  border-width: 0 1px;
  background: linear-gradient(#fff 13px, #e4e4e4 13px, #e4e4e4 14px, #fafafa 14px);
  span {
    width: 235px;
    border-right: 1px solid #111;
  }
  i {
    width: 59px;
    border-right: 1px solid #e2e2e2;
  }
`
const ScrollTrack = styled.div`
  display: flex;
  align-items: center;
  height: 25px;
  padding: 0 8px 0 6px;
  background: #f0f0f0;
`
const ScrollThumb = styled.span`
  width: 156px;
  height: 23px;
  margin: 0 auto 0 6px;
  background: #cdcdcd;
`
const DockSplit = styled.div`
  height: 6px;
  margin-top: 2px;
  border: 1px solid #a0a0a0;
  background: #d4d4d4;
`
const Heading = styled.h2`
  display: flex;
  align-items: center;
  justify-content: space-between;
  height: ${p => p.$dock ? 32 : 37}px;
  margin: ${p => p.$dock ? 0 : '0 -3px 0 -1px'};
  padding: ${p => p.$dock ? '0 6px 0 7px' : '0 0 5px'};
  border-bottom: ${p => p.$dock ? '2px solid #d0d0d0' : 0};
  color: #1b6a86;
  font-size: 20px;
  font-weight: 400;
`

const Dialog = styled.section`
  position: absolute;
  top: -1px;
  left: 0;
  width: 425px;
  padding-bottom: 10px;
  background: #efefef;
  font-size: 17px;
  box-shadow: 1px 1px 2px #aaa;
`
const DialogHead = styled.div`
  display: flex;
  align-items: center;
  height: 33px;
  padding: 1px 9px 0 10px;
  background: #52a0ba;
  color: #fff;
  font-size: 21px;
  gap: 11px;
`
const Card = styled.div`
  margin: 0 5px;
  padding: ${p => p.$pad || '2px 9px 7px 10px'};
  border-bottom: 2px solid #cdcdcd;
  background: #fff;
`
const Field = styled.div`
  display: flex;
  align-items: center;
  justify-content: space-between;
  height: ${p => p.$h || 30}px;
`
const FieldText = styled.label`
  flex: 1;
`
const TextBox = styled.input`
  width: ${p => p.$w}px;
  height: 31px;
  padding: 0 8px;
  border: 1px solid #9b9b9b;
  outline: 0;
  background: #fff;
`
const NumberBox = styled(TextBox)`
  padding: 0 3px 3px;
  text-align: right;
  color: #555;
  font-family: 'Liberation Mono', monospace;
  font-size: 20px;
`
const BoxButton = styled(PlainButton)`
  width: ${p => p.$w || 24}px;
  height: ${p => p.$h || 24}px;
  margin-left: ${p => p.$gap || 0}px;
  border: 1px solid ${p => p.$bare ? 'transparent' : '#a6a6a6'};
  background: ${p => p.$bg || 'none'};
`
const Slider = styled.input`
  width: 268px;
  height: 30px;
  margin: 0 0 0 10px;
  appearance: none;
  background: none;
  &::-webkit-slider-runnable-track {
    height: 4px;
    background: #a8a8a8;
  }
  &::-webkit-slider-thumb {
    appearance: none;
    width: 15px;
    height: 29px;
    margin-top: -12px;
    border: 1px solid #3c7488;
    background: #52a0ba;
  }
`
const Limits = styled.div`
  display: flex;
  justify-content: space-between;
  align-items: center;
  width: 288px;
  height: 31px;
  padding-left: 5px;
`
const ActiveField = styled.div`
  display: flex;
  align-items: center;
  gap: 5px;
  flex: 1;
  height: 32px;
  padding-left: 1px;
  background: #ffdf76;
`
const Expander = styled.div`
  display: flex;
  justify-content: center;
  align-items: center;
  height: 16px;
  margin: 0 5px;
  border-bottom: 1px solid #d0d0d0;
`
const DialogFoot = styled.div`
  display: flex;
  justify-content: flex-end;
  gap: 5px;
  padding: 8px 15px 0;
`
const ActionButton = styled.button`
  width: 81px;
  height: 33px;
  padding: 0;
  border: 1px solid ${p => p.$primary ? '#74b3c8' : '#a09a9a'};
  background: ${p => p.$primary ? '#74b3c8' : '#dedede'};
  color: ${p => p.$primary ? '#fff' : '#222'};
  font-size: 16px;
`

const Stage = styled.div`
  display: flex;
  flex-direction: column;
  flex: 1;
  min-width: 0;
`
const PartTabs = styled.div`
  display: flex;
  flex: none;
  height: 31px;
  border-bottom: 2px solid #52a0ba;
`
const PartTab = styled.div`
  display: flex;
  align-items: center;
  gap: 3px;
  margin-left: 10px;
  padding: 1px 5px 0 2px;
  background: #52a0ba;
  color: #fff;
  font-size: 17px;
  white-space: nowrap;
`
const PartButton = styled(PlainButton)`
  width: 15px;
`
const Canvas = styled.div`
  position: relative;
  flex: 1;
  min-height: 0;
  background: linear-gradient(#b4b5b5, #c8c9c9 26%, #d6d7d7 48%, #e6e7e7 72%, #e7e8e8);
`
const Drawing = styled.svg`
  position: absolute;
  inset: 0;
  width: 100%;
  height: 100%;
`
const CoordBox = styled.div`
  position: absolute;
  top: 7px;
  right: 13px;
  display: grid;
  grid-template-columns: 12px 90px;
  column-gap: 2px;
  align-items: center;
  padding: 3px 2px 3px 18px;
  border: 1px solid #d4d4d4;
  background: #f0f0f0;
  font-size: 17px;
`
const Grip = styled.span`
  position: absolute;
  top: 3px;
  bottom: 3px;
  left: 3px;
  width: 10px;
  background: radial-gradient(#b4b4b4 1px, transparent 2px) 0 0 / 5px 4px;
`
const CoordCell = styled.span`
  height: 31px;
  padding: 3px 4px;
  border: 1px solid #9b9b9b;
  background: #fff;
  input {
    width: 100%;
    height: 23px;
    padding: 0 0 0 ${p => p.$indent || 0}px;
    border: 0;
    outline: 0;
    background: ${p => p.$on ? '#0078d7' : '#fff'};
    color: ${p => p.$on ? '#fff' : '#222'};
  }
`
const SideBar = styled.aside`
  display: flex;
  flex-direction: column;
  align-items: center;
  flex: none;
  width: 31px;
  padding: 9px 0 8px 4px;
  background: #fff;
`
const SideButton = styled(PlainButton)`
  width: 26px;
  height: ${p => p.$h || 32}px;
`
const SideRule = styled.span`
  width: 27px;
  height: 1px;
  margin: 6px 0 auto;
  background: #d0d0d0;
`
const LeftCaret = styled(Caret)`
  transform: rotate(90deg);
`

const StatusBar = styled.footer`
  display: flex;
  align-items: center;
  flex: none;
  height: 24px;
  padding: 0 50px 0 3px;
  border-top: 2px solid #a4a4a4;
  color: #111;
  font-weight: 700;
  gap: 4px;
`
const StatusText = styled.p`
  width: ${p => p.$w || 'auto'};
  margin: 0;
  line-height: 20px;
`

/* sectioned jig, drawn in page units */
const Model = () => (
  <Drawing viewBox="410 259 1475 734" preserveAspectRatio="xMidYMid meet">
    <defs>
      <linearGradient id="bore" x1="0" x2="1" y1="0" y2="0">
        <stop offset="0" stopColor="#bd8226" />
        <stop offset=".5" stopColor="#7d5614" />
        <stop offset="1" stopColor="#94651a" />
      </linearGradient>
      <linearGradient id="pipe" x1=".35" x2=".6" y1="0" y2="1">
        <stop offset="0" stopColor="#a06c1c" />
        <stop offset=".25" stopColor="#604210" />
        <stop offset=".6" stopColor="#a07020" />
        <stop offset="1" stopColor="#dc9c34" />
      </linearGradient>
      <linearGradient id="steel" x1="0" x2="1" y1="0" y2="0">
        <stop offset="0" stopColor="#555" />
        <stop offset=".6" stopColor="#3c3c3c" />
        <stop offset="1" stopColor="#5c5c5c" />
      </linearGradient>
      <linearGradient id="tube" x1="0" x2="1" y1="0" y2="0">
        <stop offset="0" stopColor="#a06c14" />
        <stop offset=".5" stopColor="#d8982c" />
        <stop offset="1" stopColor="#94640f" />
      </linearGradient>
      <radialGradient id="ball" cx=".35" cy=".3">
        <stop offset="0" stopColor="#ff9c40" />
        <stop offset="1" stopColor="#c44c08" />
      </radialGradient>
      <radialGradient id="knob" cx=".35" cy=".3">
        <stop offset="0" stopColor="#fff08c" />
        <stop offset="1" stopColor="#c4a020" />
      </radialGradient>
      <linearGradient id="cone" x1="0" x2="1" y1="0" y2="0">
        <stop offset="0" stopColor="#f0c840" />
        <stop offset="1" stopColor="#b88c20" />
      </linearGradient>
    </defs>

    {/* base */}
    <path d="M973 731L1072 675L1140 640L1202 703L1426 832V850L1301 923z" fill="#646464" />
    <path d="M1301 922L1426 848V892L1301 964z" fill="#393939" />
    <path d="M1301 922L1426 848" stroke="#8c8c8c" strokeWidth="2" />
    <path d="M1301 920L1426 846" stroke="#333" />
    <path d="M1202 703L1426 832V892" fill="none" stroke="#222" />
    <path d="M915 700L925 696L973 731L1301 922V964L915 742z" fill="#81a560" />
    <path d="M1198 713L1237 788L1155 837" fill="none" stroke="#2c2c2c" strokeWidth="1" />

    {/* inner wall and body */}
    <path d="M973 402L1066 455V495L973 540z" fill="#3b3b3b" />
    <path d="M973 570H1010L1045 655L1075 650V677L973 731z" fill="#383838" />
    <path d="M975 531L1060 486L1098 506V553L1135 640L1131 700L1112 745L1086 705L1056 655L1008 553z" fill="#686868" />
    <path d="M1008 553L1095 504M1010 557L1095 508" stroke="#333" fill="none" />
    <path d="M1057 658Q1068 649 1082 654Q1096 662 1096 682Q1093 698 1080 707L1072 710Q1080 688 1068 674z" fill="#333" />
    <path d="M1078 652Q1098 662 1098 682Q1096 698 1084 706" stroke="#8a8a8a" fill="none" />
    <path d="M975 533L1008 553L1057 657L1040 664L1005 593L973 577z" fill="#81a560" />

    {/* column */}
    <path d="M924 374L973 402V731L924 704z" fill="#81a560" />
    <path d="M924 374V704L973 731V402" fill="none" stroke="#333" strokeWidth="1" />
    <path d="M915 700L924 696" stroke="#333" />

    {/* top plate */}
    <path d="M924 339L1018 285L1267 430V444L1187 491z" fill="#cacaca" />
    <path d="M924 339L966 314M1030 291L1267 430V478L1187 524" fill="none" stroke="#222" />
    <path d="M1187 492L1267 445V478L1187 524z" fill="#6d6d6d" />
    <path d="M1187 492L1267 445" stroke="#e8e8e8" strokeWidth="2" />
    <path d="M1187 490L1267 443" stroke="#333" />
    <path d="M924 339L1187 491V524L924 374z" fill="#81a560" />
    <path d="M924 374L1094 472" stroke="#333" />

    {/* bolt */}
    <path d="M968 305L967 328L993 342L1030 337L1039 316V304L1020 290H975z" fill="#3a3a3a" stroke="#222" />
    <path d="M984 319L993 330L1003 321zM1012 320L1030 316L1034 306z" fill="#5c5c5c" />
    <ellipse cx="1003" cy="303" rx="32" ry="18" fill="#868686" stroke="#333" />

    {/* bushing */}
    <path d="M1093 430Q1105 421 1127 421Q1161 424 1161 447V456Q1160 464 1150 469L1138 455V441z" fill="#555" stroke="#222" />
    <path d="M1093 430Q1105 421 1127 421Q1160 424 1161 446Q1158 456 1148 461L1094 436z" fill="#a2a4a6" stroke="#333" />
    <path d="M1106 437Q1112 431 1125 431Q1144 434 1144 444Q1143 450 1138 454V482H1106z" fill="url(#steel)" stroke="#222" strokeWidth=".6" />

    {/* upper left flange */}
    <path d="M1048 563Q1070 552 1096 553V608L1080 611L1074 606z" fill="#fdbf4b" />
    <path d="M1048 563Q1070 552 1096 553M1056 571Q1073 561 1096 562M1074 603Q1084 599 1096 598" stroke="#4a3408" fill="none" />
    <path d="M1031 571L1048 563L1075 610L1096 606V440L1107 436V632L1080 635L1073 626L1060 628z" fill="#81a560" />

    {/* bores */}
    <path d="M1106 482Q1120 477 1138 482V622H1106z" fill="url(#bore)" />
    <path d="M1106 484Q1120 479 1138 484" fill="none" stroke="#ffd070" strokeWidth="2" />
    <path d="M1148 490H1159V566Q1160 577 1172 579L1158 583L1148 578z" fill="url(#tube)" />
    <path d="M1148 567Q1154 563 1159 567Q1160 577 1170 579L1158 583L1148 576z" fill="#f4b448" stroke="#8a5c14" strokeWidth=".6" />
    <path d="M1150 500l10 6" stroke="#f2e4b0" strokeWidth="3" />
    <path d="M1187 572Q1197 566 1212 566C1245 570 1263 598 1263 632Q1260 668 1241 681L1230 664L1195 590z" fill="#fdbf4b" stroke="#3a2a08" />
    <path d="M1190 574Q1198 569 1208 569" fill="none" stroke="#3a2a08" />
    <path d="M1107 622L1137 611L1193 588Q1200 583 1212 583C1236 588 1248 608 1248 632Q1246 652 1233 662L1117 708Q1132 690 1130 670Q1126 652 1107 640z" fill="url(#pipe)" />
    <path d="M1194 588Q1202 584 1212 585C1232 590 1245 608 1244 632Q1243 650 1232 660" fill="none" stroke="#2e2006" />
    <path d="M1194 588Q1202 583 1212 583C1236 588 1249 608 1249 632Q1247 653 1234 662" fill="none" stroke="#4a3408" />
    <path d="M1119 647Q1132 662 1131 681Q1129 697 1120 706" fill="none" stroke="#4a3408" />
    <path d="M1138 454L1148 463V578L1162 582L1187 572L1194 588L1139 612L1137 611z" fill="#81a560" />
    <path d="M1150 463L1187 491V524L1148 502z" fill="#81a560" />

    {/* lower flange */}
    <path d="M1135 722L1198 700Q1196 742 1157 773z" fill="#fdbf4b" />
    <path d="M1194 702L1200 698Q1198 746 1157 775L1154 766Q1190 742 1194 702z" fill="#b97d18" />
    <path d="M1194 704Q1190 742 1155 765" fill="none" stroke="#3a2a08" />
    <path d="M1140 730Q1154 724 1158 712" fill="none" stroke="#3a2a08" />
    <path d="M1067 712L1088 705L1108 743L1117 740L1109 724L1119 717L1117 708L1233 662L1241 681L1137 724L1157 768L1150 778L1127 782L1155 837L1170 846L1105 812L1118 815L1103 782L1105 778L1097 758L1089 758z" fill="#81a560" />
    <path d="M1112 804L1119 816L1114 812z" fill="#555" />

    {/* section plane */}
    <path d="M893 280L1322 527V992M893 280V752L1308 992" fill="none" stroke="#4279b4" />

    {/* handles */}
    <g fill="none" strokeLinecap="round">
      <path d="M1108 562V639M1108 639L1040 679M1108 639L1176 678M1107 581Q1056 612 1057 668Q1107 694 1158 667Q1158 612 1107 581z" stroke="#9c9c9c" strokeWidth="4" />
      <path d="M1108 562V639M1108 639L1040 679M1108 639L1176 678M1107 581Q1056 612 1057 668Q1107 694 1158 667Q1158 612 1107 581z" stroke="#dedede" strokeWidth="2" />
    </g>
    <path d="M1108 540L1114 563Q1108 567 1103 563z" fill="url(#cone)" />
    <path d="M1021 690L1032 674Q1040 671 1044 677Q1045 682 1042 685z" fill="#ecd048" stroke="#c4a428" strokeWidth=".6" />
    <path d="M1193 689L1182 674Q1174 671 1171 677Q1170 682 1174 685z" fill="#ecd048" stroke="#c4a428" strokeWidth=".6" />
    <circle cx="1072" cy="619" r="4" fill="url(#knob)" />
    <circle cx="1143" cy="619" r="4" fill="url(#knob)" />
    <circle cx="1108" cy="681" r="4" fill="url(#knob)" />
    <circle cx="1108" cy="639" r="6" fill="url(#ball)" />

    {/* work csys */}
    <path d="M1107 850L1104 820L1107 808L1110 820z" fill="#1020b0" />
    <path d="M1110 852L1136 835L1147 830L1138 838z" fill="#e0f4dc" />
    <path d="M1111 855L1135 863L1147 877L1132 872z" fill="#c82018" />
    <g fontFamily="'Liberation Sans', sans-serif" fontSize="14">
      <text x="1009" y="700" fill="#1c38c8">Z</text>
      <text x="1193" y="700" fill="#d03020">X</text>
      <text x="1111" y="806" fill="#2050b0">ZC</text>
      <text x="1130" y="826" fill="#3cb034">YC</text>
      <text x="1131" y="890" fill="#d03028">XC</text>
      <text x="466" y="897" fontSize="12" fill="#2030c8">Z</text>
      <text x="499" y="953" fontSize="12" fill="#d03028">X</text>
    </g>

    {/* view triad */}
    <path d="M487 901L504 910V930L487 939L472 930V910z" fill="#c4c8c4" stroke="#a4a8a4" opacity=".8" />
    <path d="M487 901V939M472 930L506 908M472 910L504 930" stroke="#9aae9a" fill="none" />
    <path d="M470 930V903" stroke="#1830a8" strokeWidth="3" />
    <path d="M466 907L470 896L474 907z" fill="#1830a8" />
    <path d="M471 932L490 942" stroke="#c83030" strokeWidth="3" />
    <path d="M498 946L487 944L490 938z" fill="#c83030" />
    <circle cx="470" cy="931" r="4" fill="#ccc" />

    {/* watermark */}
    <g fill="#f0f0f0" opacity=".92" style={{ filter: 'drop-shadow(1px 2px 0 #555)' }}>
      <text x="578" y="536" fontSize="79" fontWeight="300" fontFamily="'Noto Sans CJK SC', sans-serif">莫西网</text>
      <text x="816" y="535" fontSize="73" fontFamily="'Liberation Serif', serif">www.3dmox.com</text>
    </g>
  </Drawing>
)

const Drop = ({ label, options, w, h, icon, caretColor, size }) => (
  <SelectWrap $w={w} $h={h}>
    {icon && <Icon name={icon} size={18} />}
    <select aria-label={label}>
      {options.map(o => <option key={o}>{o}</option>)}
    </select>
    <Caret $size={size || 6} $color={caretColor} />
  </SelectWrap>
)

const ViewSection = () => (
  <Dialog>
    <DialogHead>
      <Icon name="gearWhite" />
      View Section
      <Spacer />
      <PlainButton aria-label="Reset"><Icon name="reset" /></PlainButton>
      <PlainButton aria-label="Close"><Icon name="closeWhite" /></PlainButton>
    </DialogHead>
    <Card $pad="13px 9px 8px 10px">
      <Field $h={32}>
        <Drop label="Type" options={['One Plane']} h={32} icon="onePlane" />
      </Field>
    </Card>
    <Card>
      <Heading>Name<PlainButton aria-label="Collapse Name"><Icon name="chevUp" size={18} /></PlainButton></Heading>
      <Field $h={33}>
        <FieldText htmlFor="section-name">Section Name</FieldText>
        <TextBox $w={190} id="section-name" defaultValue="Section 1" />
      </Field>
    </Card>
    <Card>
      <Heading>Section Plane<PlainButton aria-label="Collapse Section Plane"><Icon name="chevUp" size={18} /></PlainButton></Heading>
      <Field $h={36}>
        <span>Orientation</span>
        <Drop label="Orientation" options={['Absolute']} w={174} h={32} />
      </Field>
      <Field $h={43}>
        <span>Plane</span>
        <Spacer />
        <BoxButton $bare $w={32} $h={32} $bg="#82bdd0" aria-label="X"><Icon name="planeX" size={22} /></BoxButton>
        <BoxButton $bare $w={32} $h={32} $gap={2} aria-label="Y"><Icon name="planeY" size={22} /></BoxButton>
        <BoxButton $bare $w={32} $h={32} $gap={2} aria-label="Z"><Icon name="planeZ" size={22} /></BoxButton>
        <Rule $h={1} $gap={2} />
      </Field>
      <Field $h={34}>
        <span>Specify Plane</span>
        <Spacer />
        <BoxButton aria-label="Plane dialog"><Icon name="dlgPlane" /></BoxButton>
        <BoxButton $w={32} $h={32} $gap={2} aria-label="Inferred"><Icon name="inferPlane" size={22} /></BoxButton>
        <BoxButton $w={26} $h={32} aria-label="Plane types"><Caret $size={3} /></BoxButton>
      </Field>
      <Field $h={32}>
        <span>Reverse Direction</span>
        <BoxButton $h={29} aria-label="Reverse Direction"><Icon name="reverse" /></BoxButton>
      </Field>
      <Field $h={32}>
        <span>Alternate Plane</span>
        <BoxButton $w={32} $h={32} aria-label="Alternate Plane"><Icon name="cycle" size={24} /></BoxButton>
      </Field>
    </Card>
    <Card>
      <Heading>Offset<PlainButton aria-label="Collapse Offset"><Icon name="chevUp" size={18} /></PlainButton></Heading>
      <Field $h={33}>
        <Slider type="range" min="-113.870" max="113.870" step="any" defaultValue="0" aria-label="Offset" />
        <NumberBox $w={106} defaultValue="0.0000" aria-label="Offset value" />
      </Field>
      <Limits><span>-113.87</span><span>113.87</span></Limits>
      <Field $h={31}>
        <FieldText htmlFor="step">Step</FieldText>
        <NumberBox $w={106} id="step" defaultValue="1.0000" />
      </Field>
      <Field $h={34}>
        <ActiveField><Icon name="check" size={14} />Specify Transform</ActiveField>
        <BoxButton $gap={2} aria-label="Point dialog"><Icon name="pointDlg" /></BoxButton>
        <BoxButton $bare $w={32} $h={32} $gap={2} $bg="#ffdf76" aria-label="Coordinate system"><Icon name="csys" size={22} /></BoxButton>
      </Field>
    </Card>
    <Expander><Caret $size={6} /></Expander>
    <DialogFoot>
      <ActionButton $primary>OK</ActionButton>
      <ActionButton>Cancel</ActionButton>
    </DialogFoot>
  </Dialog>
)

const menuTabs = ['Assemblies', 'Curve', 'Surface', 'Analysis', 'View', 'Render', 'Tools', 'PMI', 'Application', 'Animation Designer']

const quick = ['|', 'save', '|', 'undo', 'v', 'redo', '|', 'cut', 'copy', 'paste', 'target', '|', 'exit', 'v', '|', 'hand', '|']

const App = () => (
  <Page>
    <GlobalStyle />
    <TitleBar>
      <Progress />
      <Brand>NX</Brand>
      {quick.map((n, i) => {
        if (n === '|') return <Rule key={i} $h={26} $gap={i === 1 ? 2 : 1} />
        if (n === 'v') return <QuickButton key={i} $w={16} aria-label="more"><Caret $color={i < 8 ? '#aaa' : '#111'} /></QuickButton>
        return <QuickButton key={i} $w={n === 'save' ? 30 : n === 'exit' || n === 'hand' ? 26 : 24} aria-label={n}><Icon name={n} /></QuickButton>
      })}
      <QuickText><Icon name="switchWin" />Switch Window</QuickText>
      <QuickText><Icon name="window" />Window<Caret /></QuickText>
      <QuickButton $w={14} aria-label="Customize"><OverCaret /></QuickButton>
      <Title>NX 12 - Modeling</Title>
      <Siemens>SIEMENS</Siemens>
      <QuickButton $w={35} aria-label="Minimize"><Icon name="min" /></QuickButton>
      <QuickButton $w={35} aria-label="Restore"><Icon name="restore" size={14} /></QuickButton>
      <QuickButton $w={35} aria-label="Close"><Icon name="close" size={14} /></QuickButton>
    </TitleBar>
    <TabBar>
      <FileTab>File</FileTab>
      <Tab $active>Home</Tab>
      {menuTabs.map(t => <Tab key={t}>{t}</Tab>)}
      <Spacer />
      <FindBox>
        <input placeholder="Find a Command" aria-label="Find a Command" />
        <Icon name="search" />
      </FindBox>
      <TabTool aria-label="Full screen"><Icon name="full" /></TabTool>
      <TabTool aria-label="Minimize ribbon"><Icon name="up" size={14} /></TabTool>
      <TabTool aria-label="Help"><Icon name="help" /></TabTool>
    </TabBar>
    <Ribbon />
    <SelectionBar>
      <MenuButton><Icon name="menu" /><span><u>M</u>enu</span><Caret /></MenuButton>
      <Rule />
      <Combos>
        <Drop label="Type filter" options={['']} w={192} h={27} size={5} caretColor="#aaa" />
        <Drop label="Selection scope" options={['Entire Assembly']} w={202} h={27} />
      </Combos>
      {selectionTools.map((n, i) => {
        if (n === '|') return <Rule key={i} $gap={5} />
        if (n === 'v') return <CaretSlot key={i} $w={16} aria-label="more"><Caret /></CaretSlot>
        const on = n[0] === '+'
        return <SelectionTool key={i} $on={on} aria-label={n}><Icon name={on ? n.slice(1) : n} /></SelectionTool>
      })}
      <Spacer />
      <CaretSlot $w={16} aria-label="Toolbar options"><Caret /></CaretSlot>
    </SelectionBar>
    <Main>
      <Dock>
        <DockPanel>
          <DockTree><span /><i /></DockTree>
          <ScrollTrack><Icon name="arrowL" /><ScrollThumb /><Icon name="arrowR" /></ScrollTrack>
          <DockSplit />
          <Heading $dock>Preview<PlainButton aria-label="Expand Preview"><Icon name="chevDown" size={18} /></PlainButton></Heading>
          <Heading $dock>Dependencies<PlainButton aria-label="Expand Dependencies"><Icon name="chevDown" size={18} /></PlainButton></Heading>
        </DockPanel>
      </Dock>
      <Stage>
        <PartTabs>
          <PartTab>
            <Icon name="part" size={12} />
            ANGLE JIG ASSY..prt
            <PartButton aria-label="Pin"><Icon name="pin" size={12} /></PartButton>
            <PartButton aria-label="Close part"><Icon name="closePart" size={9} /></PartButton>
          </PartTab>
        </PartTabs>
        <Canvas>
          <Model />
          <CoordBox>
            <Grip />
            <label htmlFor="cx">X</label>
            <CoordCell $on $indent={5}><input id="cx" defaultValue="0.0000000" /></CoordCell>
            <label htmlFor="cy">Y</label>
            <CoordCell $indent={5}><input id="cy" defaultValue="0.0000000" /></CoordCell>
            <label htmlFor="cz">Z</label>
            <CoordCell><input id="cz" defaultValue="98.1000000" /></CoordCell>
          </CoordBox>
        </Canvas>
      </Stage>
      <SideBar>
        <SideButton $h={24} aria-label="Surface"><Icon name="sheet" size={22} /></SideButton>
        <SideButton $h={17} aria-label="Surface options"><Caret /></SideButton>
        <SideButton aria-label="Bend"><Icon name="bend" size={22} /></SideButton>
        <SideButton aria-label="Block"><Icon name="goldBlock" size={22} /></SideButton>
        <SideButton aria-label="Sweep"><Icon name="sweep" size={22} /></SideButton>
        <SideButton aria-label="Cavity"><Icon name="cavity" size={22} /></SideButton>
        <SideRule />
        <LeftCaret />
      </SideBar>
      <ViewSection />
    </Main>
    <StatusBar>
      <StatusText $w="48.200%">Drag a handle or select a handle for direct entry; use Alt key to turn off snapping</StatusText>
      <StatusText>Translate origin</StatusText>
      <Spacer />
      <Icon name="greyBook2" />
      <Icon name="full" />
    </StatusBar>
  </Page>
)

export default App
